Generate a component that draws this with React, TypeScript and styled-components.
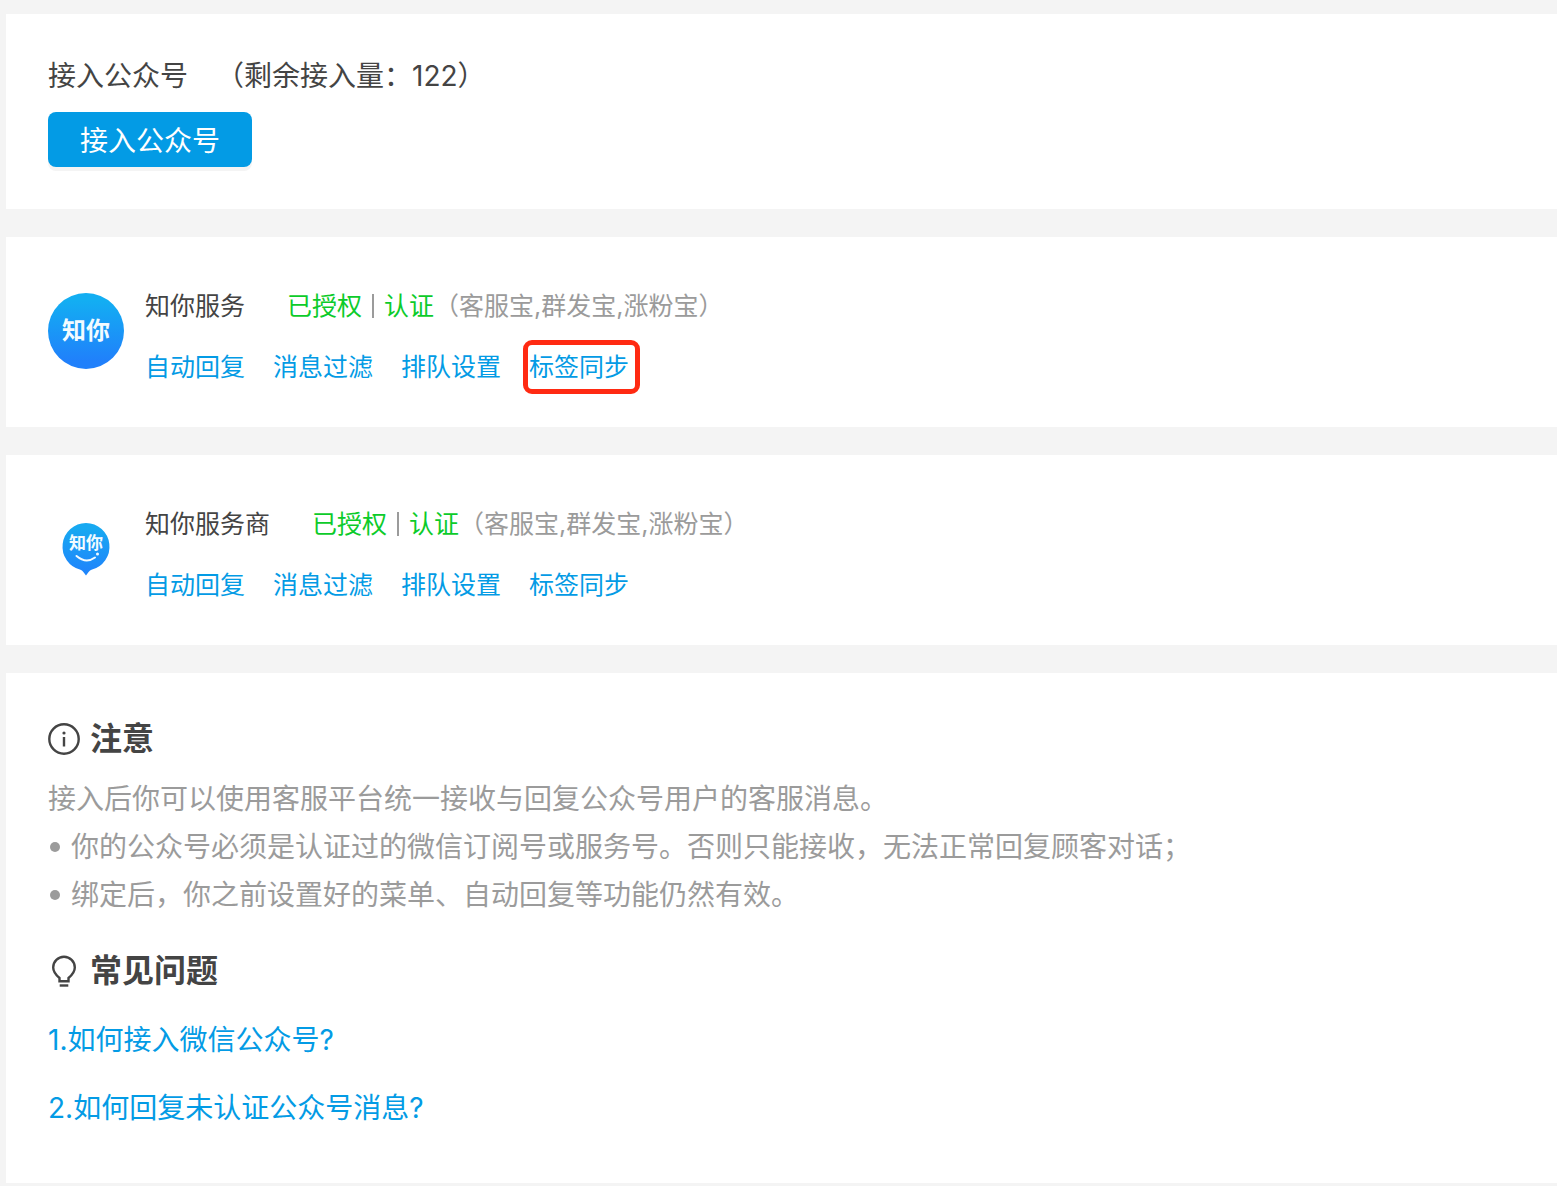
import React from "react";
import styled, { createGlobalStyle } from "styled-components";

const GlobalStyle = createGlobalStyle`
  * {
    box-sizing: border-box;
  }
  body {
    margin: 0;
    background: #f4f4f4;
    color: #444;
    font-family: Inter, "Noto Sans CJK SC", sans-serif;
    font-size: 28px;
    line-height: 48px;
  }
  h1, h2, h3, p, ul, ol {
    margin: 0;
    padding: 0;
    font: inherit;
  }
  ul, ol {
    list-style: none;
  }
`;

const Page = styled.main`
  display: flex;
  flex-direction: column;
  gap: 28px;
  padding: 14px 0 3px 6px;
`;

const Card = styled.section`
  padding: 42px;
  background: #fff;
`;

const ConnectHeader = styled.div`
  display: flex;
  gap: 28px;
  margin-bottom: 16px;
  line-height: 40px;
`;

const PrimaryButton = styled.button`
  display: block;
  height: 55px;
  padding: 3px 32px 0;
  border: 0;
  border-radius: 8px;
  background: #039be5;
  box-shadow: 0 4px 0 #f4f4f4;
  color: #fff;
  font: inherit;
  line-height: 52px;
  cursor: pointer;
`;

const AccountCard = styled(Card)`
  display: flex;
  align-items: flex-start;
  gap: 21px;
  padding-top: 51px;
  font-size: 25px;
  line-height: 36px;
`;

const Avatar = styled.svg`
  flex: none;
  width: 76px;
  height: 76px;
  margin-top: 5px;
`;

const AccountBody = styled.div`
  display: flex;
  flex-direction: column;
  gap: 25px;
`;

const AccountInfo = styled.div`
  display: flex;
  flex-wrap: wrap;
`;

const AccountName = styled.h2`
  margin-right: 42px;
`;

const Status = styled.span`
  color: #0ccb2a;
`;

const Divider = styled.span`
  align-self: center;
  width: 2px;
  height: 24px;
  margin: 0 10px;
  background: #9b9b9b;
`;

const Products = styled.span`
  color: #9b9b9b;
`;

const AccountActions = styled.nav`
  display: flex;
  flex-wrap: wrap;
  gap: 28px;
`;

const TextLink = styled.a<{ $marked?: boolean }>`
  position: relative;
  color: #039be5;
  text-decoration: none;

  &::after {
    content: "";
    display: ${(p) => (p.$marked ? "block" : "none")};
    position: absolute;
    inset: -9px -11px -9px -6px;
    border: 5px solid #ff2a12;
    border-radius: 9px;
  }
`;

const SectionTitle = styled.h2`
  display: flex;
  align-items: center;
  gap: 10px;
  font-size: 32px;
  font-weight: 700;
`;

const TitleIcon = styled.svg`
  flex: none;
  width: 32px;
  height: 32px;
  fill: none;
  stroke: #444;
  stroke-width: 2.4;
`;

const Notice = styled.div`
  margin: 12px 0 28px;
  color: #9b9b9b;
`;

const NoticeItem = styled.li`
  display: flex;
  align-items: center;

  &::before {
    content: "";
    flex: none;
    width: 10px;
    height: 10px;
    margin: 0 11px 0 2px;
    border-radius: 50%;
    background: #9b9b9b;
  }
`;

const Questions = styled.ol`
  display: flex;
  flex-direction: column;
  gap: 20px;
  padding: 21px 0 9px;
`;

const ACTIONS = ["自动回复", "消息过滤", "排队设置", "标签同步"];

const LOGO_FONT = '"Noto Sans CJK SC", sans-serif';

function RoundLogo() {
  return (
    <Avatar viewBox="0 0 76 76" role="img" aria-label="知你">
      <defs>
        <linearGradient id="round-fill" x1="0" y1="0" x2="0" y2="1">
          <stop offset="0.1" stopColor="#13aef2" />
          <stop offset="0.9" stopColor="#2080fb" />
        </linearGradient>
      </defs>
      <circle cx="38" cy="38" r="38" fill="url(#round-fill)" />
      <text x="38" y="46" textAnchor="middle" fontFamily={LOGO_FONT} fontSize="24" fontWeight="700" fill="#f2fbff">
        知你
      </text>
    </Avatar>
  );
}

function PinLogo() {
  return (
    <Avatar viewBox="0 0 76 76" role="img" aria-label="知你">
      <defs>
        <linearGradient id="pin-fill" x1="0" y1="0" x2="0" y2="1">
          <stop offset="0.1" stopColor="#17a9f1" />
          <stop offset="0.9" stopColor="#1f86fb" />
        </linearGradient>
      </defs>
      <path
        d="M38 12a23.700 23.700 0 0 1 5.500 46.700C41.500 59.400 39.700 62 38 64.500C36.300 62 34.500 59.400 32.500 58.700A23.700 23.700 0 0 1 38 12Z"
        fill="url(#pin-fill)"
      />
      <text x="38" y="38" textAnchor="middle" fontFamily={LOGO_FONT} fontSize="17" fontWeight="700" fill="#f2fbff">
        知你
      </text>
      <path d="M28.500 45Q38 53 47 46.500" fill="none" stroke="#f2fbff" strokeWidth="2" strokeLinecap="round" />
      <circle cx="49.500" cy="43" r="1.500" fill="#f2fbff" />
    </Avatar>
  );
}

function InfoIcon() {
  return (
    <TitleIcon viewBox="0 0 32 32" aria-hidden="true">
      <circle cx="16" cy="16" r="14.700" />
      <path d="M16 14v9.500" />
      <circle cx="16" cy="10" r="1.600" fill="#444" stroke="none" />
    </TitleIcon>
  );
}

function BulbIcon() {
  return (
    <TitleIcon viewBox="0 0 32 32" aria-hidden="true">
      <path d="M11.500 26.200v-3.200C8.500 20.500 5.200 17.200 5.200 12.500a10.800 10.800 0 0 1 21.600 0C26.800 17.200 23.500 20.500 20.500 23v3.200Z" />
      <path d="M11.700 30.500h8.600" />
    </TitleIcon>
  );
}

interface AccountProps {
  name: string;
  logo: React.ReactNode;
  marked?: string;
}

function Account({ name, logo, marked }: AccountProps) {
  return (
    <AccountCard>
      {logo}
      <AccountBody>
        <AccountInfo>
          <AccountName>{name}</AccountName>
          <Status>已授权</Status>
          <Divider />
          <Status>认证</Status>
          <Products>（客服宝,群发宝,涨粉宝）</Products>
        </AccountInfo>
        <AccountActions>
          {ACTIONS.map((label) => (
            <TextLink key={label} href="#" $marked={label === marked}>
              {label}
            </TextLink>
          ))}
        </AccountActions>
      </AccountBody>
    </AccountCard>
  );
}

export default function App() {
  return (
    <>
      <GlobalStyle />
      <Page>
        <Card>
          <ConnectHeader>
            <h1>接入公众号</h1>
            <span>（剩余接入量：122）</span>
          </ConnectHeader>
          <PrimaryButton type="button">接入公众号</PrimaryButton>
        </Card>

        <Account name="知你服务" logo={<RoundLogo />} marked="标签同步" />
        <Account name="知你服务商" logo={<PinLogo />} />

        <Card>
          <SectionTitle>
            <InfoIcon />
            注意
          </SectionTitle>
          <Notice>
            <p>接入后你可以使用客服平台统一接收与回复公众号用户的客服消息。</p>
            <ul>
              <NoticeItem>你的公众号必须是认证过的微信订阅号或服务号。否则只能接收，无法正常回复顾客对话；</NoticeItem>
              <NoticeItem>绑定后，你之前设置好的菜单、自动回复等功能仍然有效。</NoticeItem>
            </ul>
          </Notice>
          <SectionTitle>
            <BulbIcon />
            常见问题
          </SectionTitle>
          <Questions>
            <li>
              <TextLink href="#">1.如何接入微信公众号?</TextLink>
            </li>
            <li>
              <TextLink href="#">2.如何回复未认证公众号消息?</TextLink>
            </li>
          </Questions>
        </Card>
      </Page>
    </>
  );
}
